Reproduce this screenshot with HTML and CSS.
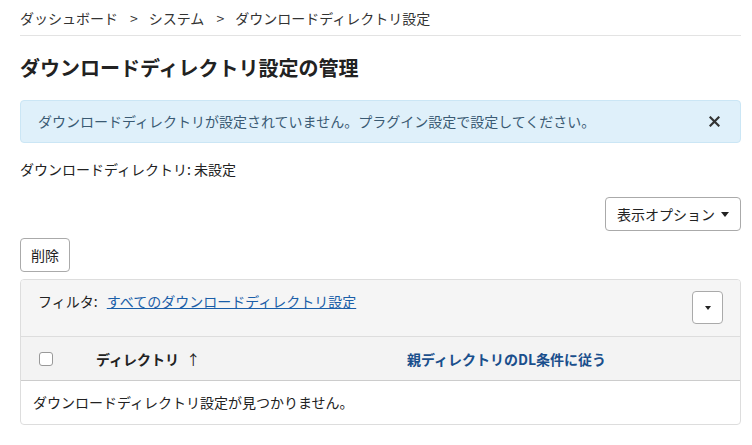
FILE: index.html
```html
<!DOCTYPE html>
<html lang="ja">
<head>
<meta charset="utf-8">
<title>ダウンロードディレクトリ設定の管理</title>
<link rel="stylesheet" href="styles.css">
</head>
<body>
<div class="page">
  <nav class="breadcrumb">
    <span>ダッシュボード</span><span class="sep">&gt;</span><span>システム</span><span class="sep">&gt;</span><span>ダウンロードディレクトリ設定</span>
  </nav>
  <h1 class="title">ダウンロードディレクトリ設定の管理</h1>
  <div class="alert">
    <span>ダウンロードディレクトリが設定されていません。プラグイン設定で設定してください。</span>
    <svg class="close" width="11" height="11" viewBox="0 0 11 11"><path d="M1.5 1.5 L9.5 9.5 M9.5 1.5 L1.5 9.5" stroke="#333" stroke-width="2.2" stroke-linecap="square"/></svg>
  </div>
  <p class="status">ダウンロードディレクトリ: 未設定</p>
  <div class="options-row">
    <button class="btn">表示オプション <span class="caret"></span></button>
  </div>
  <div class="actions">
    <button class="btn">削除</button>
  </div>
  <div class="panel">
    <div class="panel-head">
      <div class="filter">フィルタ: <a href="#" class="link">すべてのダウンロードディレクトリ設定</a></div>
      <button class="btn btn-sm"><span class="caret small"></span></button>
    </div>
    <div class="thead">
      <div class="cell-check"><span class="checkbox"></span></div>
      <div class="cell-dir">ディレクトリ <span class="arrow">↑</span></div>
      <div class="cell-parent">親ディレクトリのDL条件に従う</div>
    </div>
    <div class="empty">ダウンロードディレクトリ設定が見つかりません。</div>
  </div>
</div>
</body>
</html>
```

FILE: styles.css
```css
* { box-sizing: border-box; }
body {
  margin: 0;
  font-family: "Noto Sans CJK JP", "Noto Sans", "Liberation Sans", sans-serif;
  font-size: 14px;
  line-height: 20px;
  color: #333;
  background: #fff;
}
.page {
  padding: 0 11px 0 20px;
}
.breadcrumb {
  padding: 8px 0 7px;
  border-bottom: 1px solid #e3e3e3;
  display: flex;
  color: #333;
}
.breadcrumb .sep {
  margin: 0 11px 0 12px;
}
.title {
  margin: 18px 0 0;
  font-size: 20px;
  line-height: 28px;
  font-weight: 700;
  color: #222;
}
.alert {
  margin-top: 18px;
  display: flex;
  justify-content: space-between;
  align-items: center;
  padding: 10px 17px;
  line-height: 21px;
  background: #dff0fa;
  border: 1px solid #cbe6f5;
  border-radius: 4px;
  color: #3a5a73;
}
.alert .close {
  display: block;
  margin-right: 3px;
}
.status {
  margin: 16px 0 0;
  color: #222;
}
.options-row {
  margin-top: 18px;
  display: flex;
  justify-content: flex-end;
}
.btn {
  font-family: inherit;
  font-size: 14px;
  line-height: 20px;
  color: #222;
  background: #fff;
  border: 1px solid #aaa;
  border-radius: 4px;
  padding: 6px 11px;
  height: 34px;
  display: inline-flex;
  align-items: center;
}
.caret {
  display: inline-block;
  width: 0;
  height: 0;
  border-left: 4px solid transparent;
  border-right: 4px solid transparent;
  border-top: 5px solid #222;
  margin-left: 6px;
}
.caret.small {
  margin-left: 0;
  border-left-width: 3.5px;
  border-right-width: 3.5px;
  border-top-width: 4px;
}
.actions {
  margin-top: 7px;
}
.actions .btn {
  padding: 6px 10px;
}
.panel {
  margin-top: 7px;
  border: 1px solid #ddd;
  border-radius: 4px;
  overflow: hidden;
}
.panel-head {
  background: #f5f5f5;
  padding: 11px 17px 12px;
  display: flex;
  justify-content: space-between;
  align-items: flex-start;
  border-bottom: 1px solid #ddd;
}
.filter {
  color: #222;
}
.link {
  color: #1a5ea8;
  text-decoration: underline;
  margin-left: 6px;
}
.btn-sm {
  width: 31px;
  height: 33px;
  padding: 0;
  justify-content: center;
}
.thead {
  display: flex;
  align-items: center;
  height: 44px;
  background: #f3f3f3;
  border-bottom: 1px solid #ccc;
  font-weight: 700;
  color: #222;
}
.cell-check {
  width: 75px;
  padding-left: 18px;
  display: flex;
  align-items: center;
}
.checkbox {
  width: 14px;
  height: 14px;
  border: 1px solid #999;
  border-radius: 3px;
  background: #fff;
}
.cell-dir {
  width: 311px;
}
.arrow {
  margin-left: 4px;
  font-weight: 400;
}
.cell-parent {
  color: #1a4f8c;
}
.empty {
  padding: 11px 12px 12px;
  color: #222;
}
```
